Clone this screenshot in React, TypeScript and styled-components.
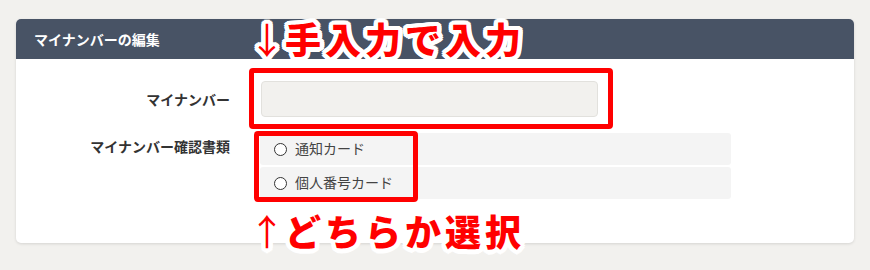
import React from "react";
import styled, { createGlobalStyle } from "styled-components";

const outline = (r: number) =>
  Array.from({ length: 16 }, (_, i) => {
    const a = (i / 16) * Math.PI * 2;
    return `${(Math.cos(a) * r).toFixed(2)}px ${(Math.sin(a) * r).toFixed(2)}px 0 #fff`;
  }).join(", ");

const whiteEdge = [outline(4.5), outline(3), outline(1.5)].join(", ");

const GlobalStyle = createGlobalStyle`
  html, body {
    margin: 0;
    padding: 0;
    background: #f2f1ee;
  }
  body {
    font-family: "Noto Sans CJK JP", "Noto Sans", sans-serif;
  }
`;

const Page = styled.div`
  position: relative;
  width: 870px;
  height: 270px;
  padding: 19px 16px 0;
  box-sizing: border-box;
`;

const Card = styled.section`
  background: #fff;
  border-radius: 5px;
  box-shadow: 0 1px 3px rgba(0, 0, 0, 0.12);
  overflow: hidden;
`;

const CardHeader = styled.h2`
  margin: 0;
  height: 40px;
  display: flex;
  align-items: center;
  padding-left: 18px;
  background: #485365;
  color: #fff;
  font-size: 14px;
  font-weight: 700;
`;

const Form = styled.div`
  display: grid;
  grid-template-columns: 214px 1fr;
  column-gap: 30px;
  row-gap: 16px;
  padding: 22px 0 44px;
`;

const Label = styled.div<{ $top?: boolean }>`
  display: flex;
  justify-content: flex-end;
  align-items: ${(p) => (p.$top ? "flex-start" : "center")};
  padding-top: ${(p) => (p.$top ? "3px" : "0")};
  font-size: 14px;
  font-weight: 700;
  line-height: 20px;
  color: #333;
`;

const TextInput = styled.input`
  box-sizing: border-box;
  width: 337px;
  height: 36px;
  margin-left: 1px;
  border: 1px solid #e2e1dd;
  border-radius: 4px;
  background: #f2f1ee;
  outline: none;
`;

const RadioGroup = styled.div`
  display: flex;
  flex-direction: column;
  gap: 2px;
  width: 471px;
`;

const RadioRow = styled.label`
  display: flex;
  align-items: center;
  gap: 8px;
  height: 32px;
  padding-left: 14px;
  padding-bottom: 2px;
  box-sizing: border-box;
  background: #f4f4f4;
  border-radius: 3px;
  font-size: 14px;
  color: #444;
`;

const Circle = styled.span`
  box-sizing: border-box;
  width: 13px;
  height: 13px;
  border: 1.3px solid #333;
  border-radius: 50%;
  background: #fff;
  margin-top: 3px;
`;

const RedFrame = styled.div<{ $x: number; $y: number; $w: number; $h: number }>`
  position: absolute;
  left: ${(p) => p.$x}px;
  top: ${(p) => p.$y}px;
  width: ${(p) => p.$w}px;
  height: ${(p) => p.$h}px;
  box-sizing: border-box;
  border: 5px solid #ff0000;
  border-radius: 4px;
  pointer-events: none;
`;

const Note = styled.div<{ $x: number; $y: number }>`
  position: absolute;
  left: ${(p) => p.$x}px;
  top: ${(p) => p.$y}px;
  font-size: 36px;
  font-weight: 900;
  letter-spacing: 4px;
  line-height: 1;
  color: #ff0000;
  white-space: nowrap;
  text-shadow: ${whiteEdge};
`;

const Arrow = styled.span`
  font-weight: 400;
  letter-spacing: 0;
  margin-right: 0;
`;

export default function App() {
  return (
    <>
      <GlobalStyle />
      <Page>
        <Card>
          <CardHeader>マイナンバーの編集</CardHeader>
          <Form>
            <Label>マイナンバー</Label>
            <TextInput type="text" />
            <Label $top>マイナンバー確認書類</Label>
            <RadioGroup>
              <RadioRow>
                <Circle />
                通知カード
              </RadioRow>
              <RadioRow>
                <Circle />
                個人番号カード
              </RadioRow>
            </RadioGroup>
          </Form>
        </Card>

        <RedFrame $x={249} $y={68} $w={364} $h={61} />
        <RedFrame $x={254} $y={131} $w={164} $h={71} />

        <Note $x={249} $y={20}>
          <Arrow>↓</Arrow>手入力で入力
        </Note>
        <Note $x={249} $y={212}>
          <Arrow>↑</Arrow>どちらか選択
        </Note>
      </Page>
    </>
  );
}
